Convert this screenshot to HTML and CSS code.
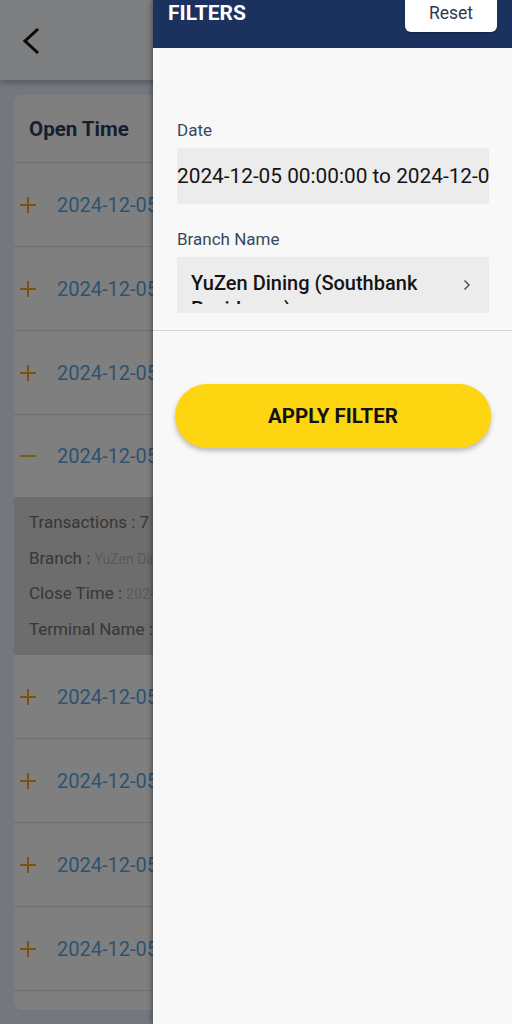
FILE: index.html
```html
<!DOCTYPE html>
<html lang="en">
<head>
<meta charset="utf-8">
<title>Filters</title>
<link rel="stylesheet" href="styles.css">
</head>
<body>
<div class="screen">
  <div class="page">
    <header class="appbar">
      <svg class="back" width="20" height="28" viewBox="0 0 20 28"><path d="M17 2 L4 14 L17 26" fill="none" stroke="#111" stroke-width="3"/></svg>
    </header>
    <main class="content">
      <section class="card">
        <div class="card-head">Open Time</div>
        <div class="row"><span class="sign plus"></span><span class="date">2024-12-05 09:00:00</span></div>
        <div class="row"><span class="sign plus"></span><span class="date">2024-12-05 09:00:00</span></div>
        <div class="row"><span class="sign plus"></span><span class="date">2024-12-05 09:00:00</span></div>
        <div class="row open"><span class="sign minus"></span><span class="date">2024-12-05 09:00:00</span></div>
        <div class="detail">
          <div class="d-line">Transactions : <span class="d-val big">7</span></div>
          <div class="d-line">Branch : <span class="d-val">YuZen Dining (Southbank Residence)</span></div>
          <div class="d-line">Close Time : <span class="d-val">2024-12-05 22:00:00</span></div>
          <div class="d-line">Terminal Name : <span class="d-val">POS 1</span></div>
        </div>
        <div class="row"><span class="sign plus"></span><span class="date">2024-12-05 09:00:00</span></div>
        <div class="row"><span class="sign plus"></span><span class="date">2024-12-05 09:00:00</span></div>
        <div class="row"><span class="sign plus"></span><span class="date">2024-12-05 09:00:00</span></div>
        <div class="row"><span class="sign plus"></span><span class="date">2024-12-05 09:00:00</span></div>
        <div class="row short"></div>
      </section>
    </main>
  </div>
  <div class="scrim"></div>
  <aside class="drawer">
    <div class="drawer-head">
      <span class="drawer-title">FILTERS</span>
      <button class="reset">Reset</button>
    </div>
    <div class="drawer-body">
      <div class="fields">
        <label class="f-label">Date</label>
        <div class="f-box date-box">2024-12-05 00:00:00 to 2024-12-05 23:59:59</div>
        <label class="f-label second">Branch Name</label>
        <div class="f-box branch-box">
          <span class="branch-text">YuZen Dining (Southbank Residence)</span>
          <svg class="chev" width="8" height="12" viewBox="0 0 8 12"><path d="M1.5 1.5 L6 6 L1.5 10.5" fill="none" stroke="#555" stroke-width="1.5"/></svg>
        </div>
      </div>
      <div class="divider"></div>
      <button class="apply">APPLY FILTER</button>
    </div>
  </aside>
</div>
</body>
</html>
```

FILE: styles.css
```css
* { box-sizing: border-box; }
html, body { margin: 0; padding: 0; }
body {
  width: 512px;
  height: 1024px;
  overflow: hidden;
  font-family: Roboto, "Liberation Sans", sans-serif;
}
.screen {
  position: relative;
  width: 512px;
  height: 1024px;
  overflow: hidden;
}
.page {
  width: 512px;
  height: 1024px;
  background: #e9f1fc;
  display: flex;
  flex-direction: column;
}
.appbar {
  height: 80px;
  flex: none;
  background: #fafcff;
  box-shadow: 0 3px 6px rgba(0,0,0,0.25);
  display: flex;
  align-items: center;
  padding-left: 21px;
}
.back { display: block; margin-top: 1px; }
.content {
  padding: 15px 14px 0 14px;
}
.card {
  background: #ffffff;
  border-radius: 8px;
  overflow: hidden;
  height: 915px;
}
.card-head {
  height: 68px;
  display: flex;
  align-items: center;
  padding-left: 15px;
  font-size: 20.5px;
  font-weight: 700;
  color: #2a3d62;
  border-bottom: 1px solid #dedede;
}
.row {
  height: 84px;
  display: flex;
  align-items: center;
  border-bottom: 1px solid #dedede;
  padding-left: 6px;
  gap: 21px;
}
.row.open { height: 82px; border-bottom: none; }
.row.short { height: 24px; }
.sign {
  position: relative;
  width: 16px;
  height: 16px;
  flex: none;
}
.sign::before, .sign::after {
  content: "";
  position: absolute;
  background: #f6a21a;
}
.sign::before { left: 0; right: 0; top: 7px; height: 2px; }
.plus::after { top: 0; bottom: 0; left: 7px; width: 2px; }
.minus::before { background: #eec21c; }
.date {
  font-size: 20px;
  color: #5aa6e6;
  white-space: nowrap;
}
.detail {
  background: #dadada;
  height: 158px;
  padding: 14px 15px 0 15px;
  display: flex;
  flex-direction: column;
}
.d-line {
  height: 35.5px;
  font-size: 17px;
  color: #6e6e6e;
  white-space: nowrap;
  line-height: 22px;
}
.d-val { font-size: 14px; color: #b4b4b4; }
.d-val.big { font-size: 17px; color: #6e6e6e; }
.scrim {
  position: absolute;
  inset: 0;
  z-index: 2;
  background: rgba(0,0,0,0.5);
}
.drawer {
  position: absolute;
  z-index: 3;
  top: 0;
  left: 153px;
  width: 359px;
  height: 1024px;
  background: #f8f8f8;
  box-shadow: -2px 0 4px rgba(0,0,0,0.3);
  display: flex;
  flex-direction: column;
}
.drawer-head {
  height: 48px;
  flex: none;
  background: #1b325e;
  display: flex;
  justify-content: space-between;
  align-items: flex-start;
  padding: 0 15px 0 15px;
}
.drawer-title {
  color: #ffffff;
  font-size: 21px;
  font-weight: 700;
  line-height: 26px;
}
.reset {
  margin-top: -8px;
  width: 92px;
  height: 40px;
  background: #ffffff;
  border: none;
  border-radius: 6px;
  font-family: Roboto, "Liberation Sans", sans-serif;
  font-size: 17.5px;
  line-height: 24px;
  color: #2c3a4f;
  padding: 2px 0 0 0;
  box-shadow: 0 1px 2px rgba(0,0,0,0.3);
}
.drawer-body {
  display: flex;
  flex-direction: column;
}
.fields {
  display: flex;
  flex-direction: column;
  padding: 72px 23px 0 24px;
}
.f-label {
  font-size: 17px;
  line-height: 20px;
  color: #34495e;
  margin-bottom: 8px;
}
.f-label.second { margin-top: 25px; }
.f-box {
  height: 56px;
  background: #ececec;
  overflow: hidden;
}
.date-box {
  font-size: 20.8px;
  color: #141414;
  white-space: nowrap;
  line-height: 56px;
}
.branch-box {
  display: flex;
  align-items: flex-start;
  padding: 13px 18px 0 14px;
  gap: 20px;
}
.branch-text {
  flex: 1;
  height: 34px;
  overflow: hidden;
  font-size: 20px;
  font-weight: 500;
  line-height: 26px;
  color: #141414;
  white-space: normal;
}
.chev { margin-top: 9px; flex: none; }
.divider {
  height: 1px;
  background: #d4d4d4;
  margin-top: 17px;
}
.apply {
  margin: 53px 21px 0 22px;
  height: 64px;
  border: none;
  border-radius: 32px;
  background: #fdd511;
  box-shadow: 0 3px 5px rgba(0,0,0,0.25);
  font-family: Roboto, "Liberation Sans", sans-serif;
  font-size: 20.5px;
  font-weight: 700;
  color: #111111;
}
```
